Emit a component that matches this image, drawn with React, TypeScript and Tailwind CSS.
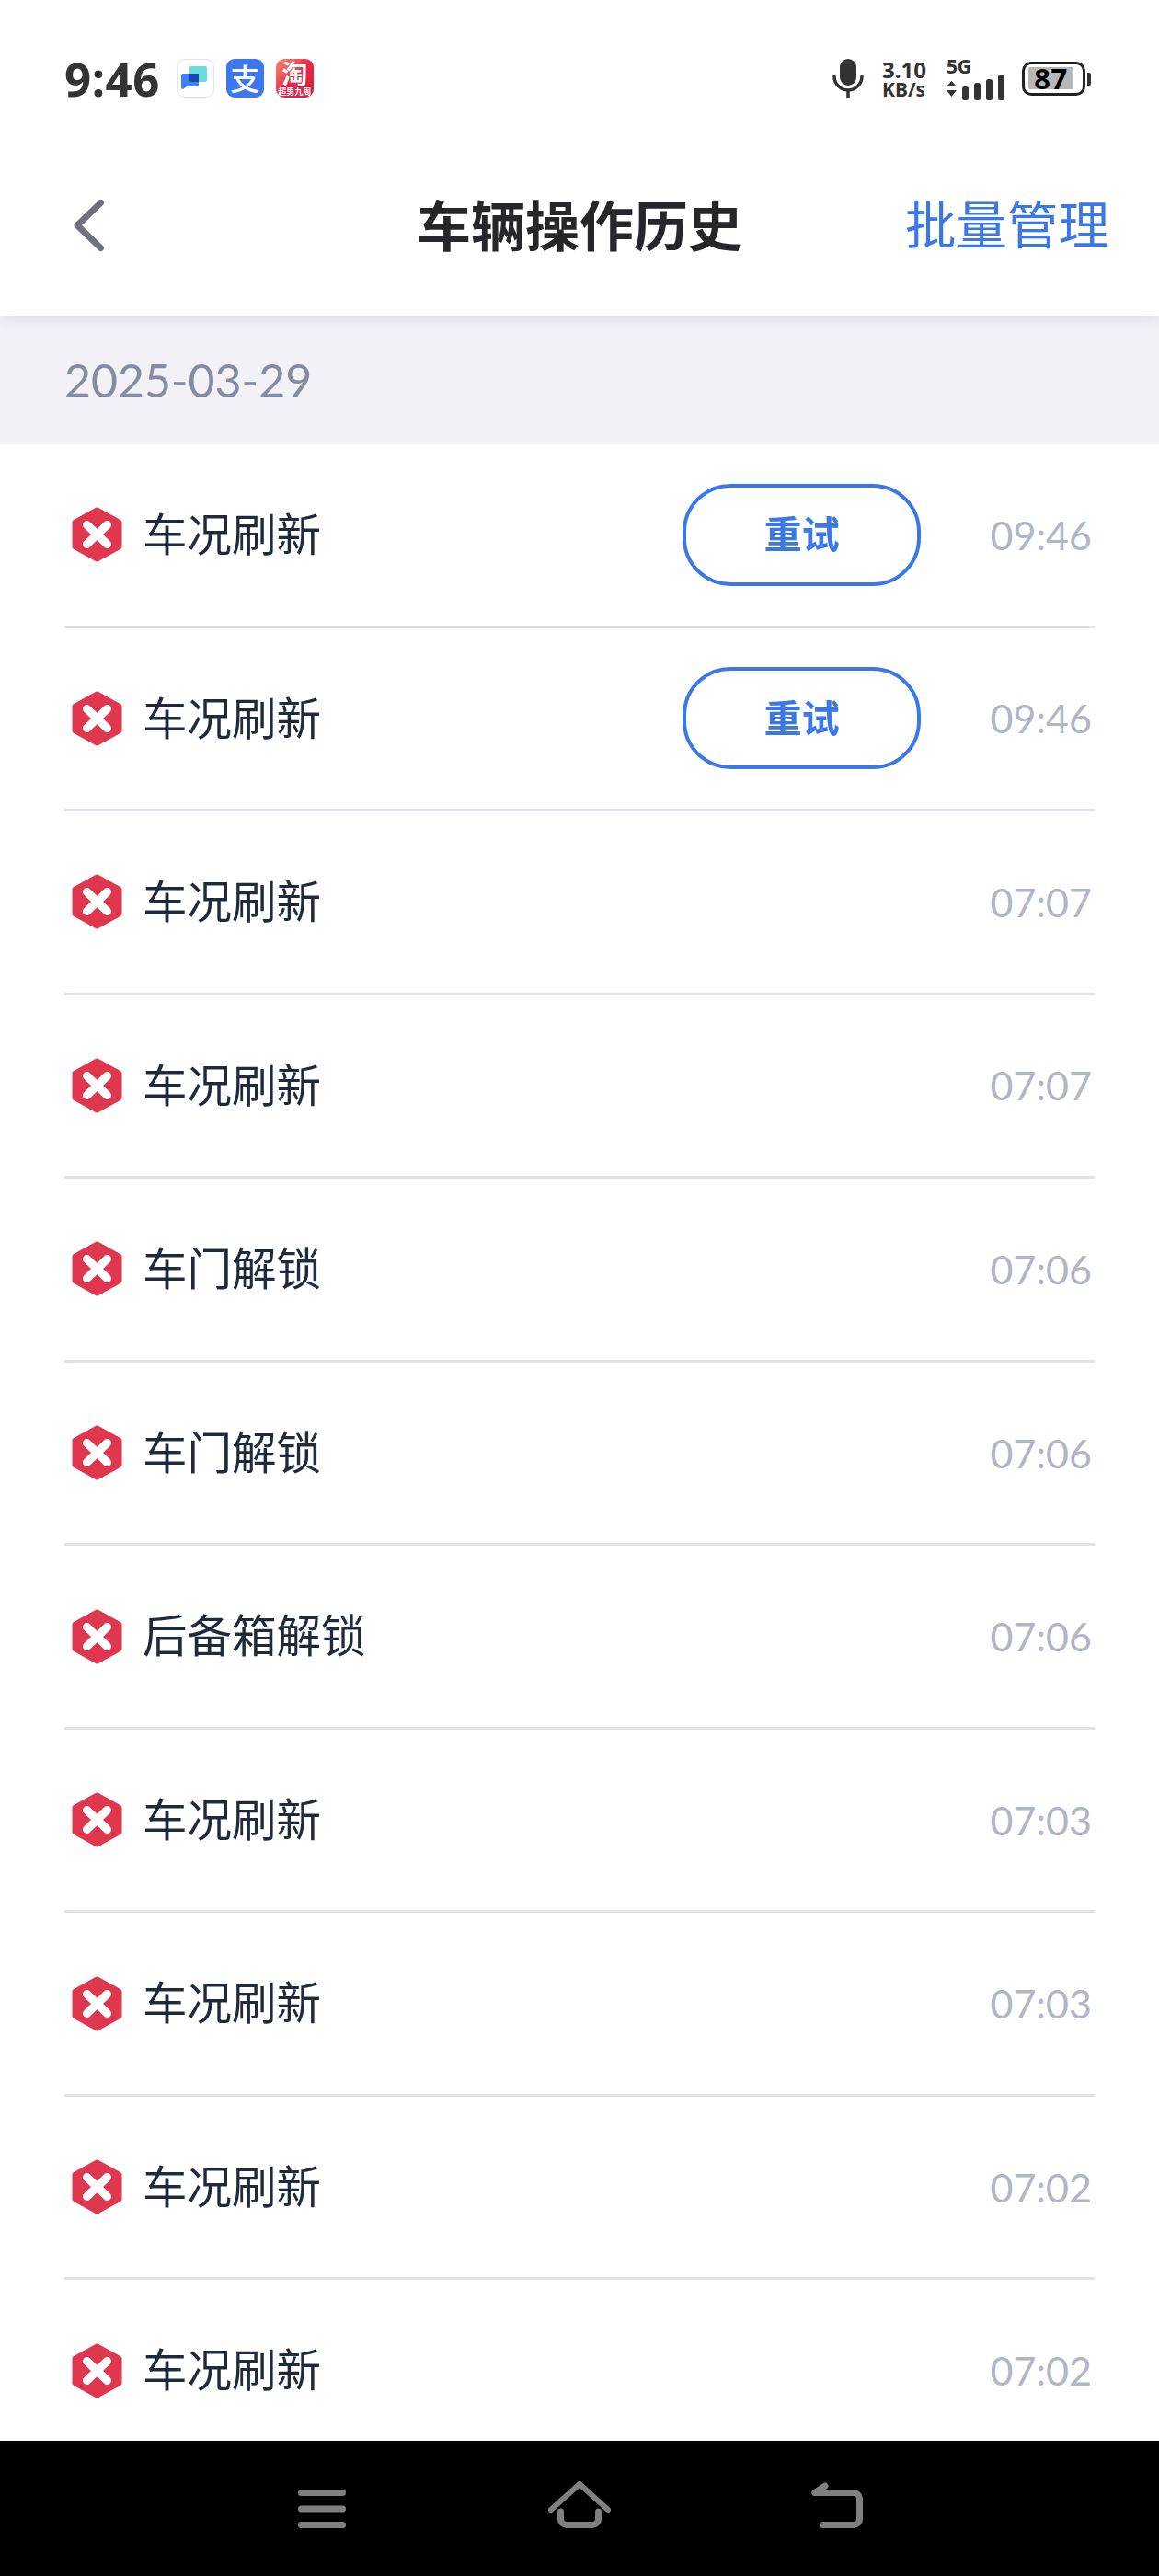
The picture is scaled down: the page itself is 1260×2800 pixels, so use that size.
import React from "react";

interface HistoryRow {
  label: string;
  time: string;
  retry?: boolean;
}

const rows: HistoryRow[] = [
  { label: "车况刷新", time: "09:46", retry: true },
  { label: "车况刷新", time: "09:46", retry: true },
  { label: "车况刷新", time: "07:07" },
  { label: "车况刷新", time: "07:07" },
  { label: "车门解锁", time: "07:06" },
  { label: "车门解锁", time: "07:06" },
  { label: "后备箱解锁", time: "07:06" },
  { label: "车况刷新", time: "07:03" },
  { label: "车况刷新", time: "07:03" },
  { label: "车况刷新", time: "07:02" },
  { label: "车况刷新", time: "07:02" },
];

const cjk = "font-['Noto_Sans_CJK_SC','Noto_Sans',sans-serif]";

const FailIcon = () => (
  <svg width="55" height="60" viewBox="0 0 55 60" className="shrink-0">
    <path
      d="M27.5 3 L52 16.5 V43.5 L27.5 57 L3 43.5 V16.5 Z"
      fill="#de374e"
      stroke="#de374e"
      strokeWidth="5"
      strokeLinejoin="round"
    />
    <path
      d="M16.5 19.5 L38.5 40.5 M38.5 19.5 L16.5 40.5"
      stroke="#fff"
      strokeWidth="9"
      strokeLinecap="round"
    />
  </svg>
);

const ChatIcon = () => (
  <div className="w-[41px] h-[42px] rounded-[9px] border border-[#e4e4e8] bg-white flex items-center justify-center">
    <svg width="30" height="26" viewBox="0 0 30 26">
      <path d="M9 2 a2 2 0 0 1 2 -2 H26 a2 2 0 0 1 2 2 V15 a2 2 0 0 1 -2 2 H9 Z" fill="#67dde0" />
      <path d="M2 8 H17 a2 2 0 0 1 2 2 V20 a2 2 0 0 1 -2 2 H6 L2 25 a2 2 0 0 1 -2 -2 V10 a2 2 0 0 1 2 -2 Z" fill="#3f82f5" />
      <path d="M9 8 H19 V17 H11 a2 2 0 0 1 -2 -2 Z" fill="#1c4aa6" />
    </svg>
  </div>
);

const AlipayIcon = () => (
  <div
    className={`w-[41px] h-[42px] rounded-[9px] bg-[#3b78f0] flex items-center justify-center text-white text-[32px] leading-none font-medium pb-[2px] ${cjk}`}
  >
    支
  </div>
);

const TaobaoIcon = () => (
  <div
    className={`w-[41px] h-[42px] rounded-[9px] bg-gradient-to-br from-[#f08a6a] via-[#e8264c] to-[#d81e3c] flex flex-col items-center text-white ${cjk}`}
  >
    <span className="text-[28px] leading-[31px] font-bold">淘</span>
    <span className="text-[9px] leading-[10px] font-bold whitespace-nowrap">超男九周</span>
  </div>
);

const StatusBar = () => (
  <div className="h-[170px] flex items-center pl-[70px] pr-[80px]">
    <span className="font-['Noto_Sans',sans-serif] font-bold text-[51px] leading-none text-[#333] tracking-[0.5px]">
      9:46
    </span>
    <div className="flex gap-[13px] ml-[18px]">
      <ChatIcon />
      <AlipayIcon />
      <TaobaoIcon />
    </div>

    <div className="ml-auto flex items-center text-[#333]">
      <svg width="34" height="42" viewBox="0 0 34 42" fill="none">
        <rect x="8" y="0" width="18" height="29" rx="9" fill="#333" />
        <path d="M2 19 a15 15 0 0 0 30 0" stroke="#333" strokeWidth="3.5" strokeLinecap="round" />
        <path d="M17 34 V42" stroke="#333" strokeWidth="3.5" />
      </svg>
      <div className="ml-[20px] w-[50px] flex flex-col font-['Noto_Sans',sans-serif] font-bold leading-none">
        <span className="text-[24px] leading-[24px]">3.10</span>
        <span className="text-[21px] leading-[18px]">KB/s</span>
      </div>
      <div className="ml-[20px] w-[63px] flex flex-col">
        <span className="font-['Noto_Sans',sans-serif] font-bold text-[21px] leading-[22px] tracking-[-0.3px]">
          5G
        </span>
        <svg width="63" height="28" viewBox="0 0 63 28" className="-mt-[2px]">
          <path d="M0 10 L5.5 4 L11 10 Z M0 14 H11 L5.5 21 Z" fill="#333" transform="translate(0 3)" />
          <rect x="17" y="13" width="7" height="15" rx="2.5" fill="#333" />
          <rect x="30" y="9" width="7" height="19" rx="2.5" fill="#333" />
          <rect x="43" y="5" width="7" height="23" rx="2.5" fill="#333" />
          <rect x="56" y="0" width="7" height="28" rx="2.5" fill="#333" />
        </svg>
      </div>
      <div className="ml-[19px] relative w-[69px] h-[37px] rounded-[10px] border-[3px] border-[#222] flex items-center">
        <div className="ml-[4px] w-[49px] h-[24px] bg-[#b7b7b7] rounded-[2px] flex items-center justify-center">
          <span className="font-['Noto_Sans',sans-serif] font-bold text-[31px] leading-none text-black tracking-[0.5px]">
            87
          </span>
        </div>
        <div className="absolute -right-[9px] top-[9px] w-[4px] h-[14px] rounded-r-[2px] bg-[#333]" />
      </div>
    </div>
  </div>
);

const NavBar = () => (
  <div className="relative h-[150px] flex items-center justify-center">
    <svg width="40" height="64" viewBox="0 0 40 64" fill="none" className="absolute left-[76px] top-[43px]">
      <path d="M33.5 7.5 L8 32 L33.5 56.5" stroke="#6f727d" strokeWidth="7" strokeLinecap="round" strokeLinejoin="round" />
    </svg>
    <span className={`${cjk} font-bold text-[59px] leading-none text-[#26272b] pb-[6px]`}>车辆操作历史</span>
    <span className={`${cjk} absolute left-[984px] text-[55.5px] leading-none text-[#3b78e7] pb-[6px]`}>批量管理</span>
  </div>
);

const Row: React.FC<{ row: HistoryRow }> = ({ row }) => (
  <div className="mx-[70px] h-[199.56px] shrink-0 border-b-[3px] border-[#e1e1e8] flex items-center pl-[8px] pr-[3px]">
    <FailIcon />
    <span className={`${cjk} ml-[22px] text-[48.5px] leading-none text-[#1f2a3c] pb-[6px]`}>{row.label}</span>
    <div className="ml-auto flex items-center">
      {row.retry && (
        <button
          className={`${cjk} w-[259px] h-[111px] rounded-[52px] border-[4px] border-[#3b78e7] bg-white text-[41px] leading-none font-bold text-[#3b78e7] flex items-center justify-center pb-[5px]`}
        >
          重试
        </button>
      )}
      <span className="w-[186px] text-right font-['Lato',sans-serif] text-[43px] leading-none font-normal text-[#b2b5c4]">
        {row.time}
      </span>
    </div>
  </div>
);

const BottomBar = () => (
  <div className="h-[147px] shrink-0 bg-black relative">
    <svg width="1260" height="147" viewBox="0 0 1260 147" fill="none" className="absolute inset-0">
      <g stroke="#808080" strokeLinecap="round" strokeLinejoin="round">
        <path d="M327.5 56.5 H372.5 M327.5 74 H372.5 M327.5 91.5 H372.5" strokeWidth="7" />
        <path d="M599 75 L630 47 L661 75" strokeWidth="6" />
        <path d="M609.5 77 V85 a6.5 6.5 0 0 0 6.5 6.5 H644 a6.5 6.5 0 0 0 6.5 -6.5 V77" strokeWidth="7" />
        <path d="M886 56.5 H928 a6.5 6.5 0 0 1 6.5 6.5 V85 a6.5 6.5 0 0 1 -6.5 6.5 H895" strokeWidth="7" />
        <path d="M886 56.5 L897 49" strokeWidth="7" />
      </g>
    </svg>
  </div>
);

const App: React.FC = () => {
  return (
    <div className="w-[1260px] h-[2800px] bg-white flex flex-col overflow-hidden">
      <div className="relative z-10 h-[343px] shrink-0 bg-white shadow-[0_3px_14px_#d9dae8]">
        <StatusBar />
        <NavBar />
      </div>

      <div className="h-[140px] shrink-0 bg-[#f1f1f7] flex items-center pl-[70px]">
        <span className="font-['Lato',sans-serif] text-[50px] leading-none font-normal text-[#868ca0]">
          2025-03-29
        </span>
      </div>

      <div className="flex-1 min-h-0 overflow-hidden flex flex-col">
        {rows.map((row, i) => (
          <Row key={i} row={row} />
        ))}
      </div>

      <BottomBar />
    </div>
  );
};

export default App;
